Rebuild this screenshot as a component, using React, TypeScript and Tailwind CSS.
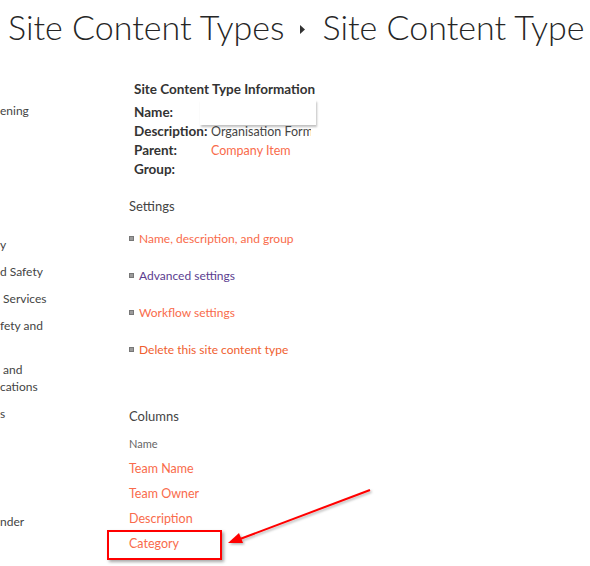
import React from "react"

const navItems = [
  { text: "ening", mt: "mt-[52px]" },
  { text: "y", mt: "mt-[117px]" },
  { text: "d Safety", mt: "mt-[10px]" },
  { text: " Services", mt: "mt-[10px]" },
  { text: "fety and", mt: "mt-[10px]" },
  { text: " and", mt: "mt-[27px]" },
  { text: "cations", mt: "mt-0" },
  { text: "s", mt: "mt-[10px]" },
  { text: "nder", mt: "mt-[91px]" },
]

const settings = [
  { label: "Name, description, and group", color: "text-[#f96b4b]" },
  { label: "Advanced settings", color: "text-[#5b3d8f]" },
  { label: "Workflow settings", color: "text-[#f96b4b]" },
  { label: "Delete this site content type", color: "text-[#f0602f]" },
]

const columns = ["Team Name", "Team Owner", "Description", "Category"]

function Info() {
  return (
    <div className="pl-[5px]">
      <div className="font-bold text-[13.5px] text-[#333] leading-[19px]">Site Content Type Information</div>
      <div className="mt-[4px] grid grid-cols-[77px_1fr] leading-[19px] text-[12.5px]">
        <div className="font-bold text-[13.5px] text-[#333]">Name:</div>
        <div className="relative">
          <div className="absolute left-[-11px] top-[-3px] w-[116px] h-[25px] bg-white shadow-[1px_2px_2px_rgba(0,0,0,0.25)]" />
        </div>
        <div className="font-bold text-[13.5px] text-[#333]">Description:</div>
        <div className="relative w-[100px] overflow-hidden whitespace-nowrap text-[#444]">Organisation Form</div>
        <div className="font-bold text-[13.5px] text-[#333]">Parent:</div>
        <div className="text-[#f96b4b]">Company Item</div>
        <div className="font-bold text-[13.5px] text-[#333]">Group:</div>
        <div />
      </div>
    </div>
  )
}

export default function App() {
  return (
    <div className="relative h-[566px] w-[590px] overflow-hidden bg-white text-[12px] text-[#444]" style={{ fontFamily: 'Lato, "Open Sans", sans-serif' }}>
      <div className="flex items-center pl-[8px] pt-[2px] h-[50px] whitespace-nowrap text-[34px] font-light text-[#262626]">
        <span>Site Content Types</span>
        <svg width="7" height="9" viewBox="0 0 7 9" className="ml-[15px] mr-[16px] mt-[6px]">
          <path d="M1 0 L6 4.5 L1 9 Z" fill="#333" />
        </svg>
        <span>Site Content Type</span>
      </div>

      <div className="flex">
        <div className="w-[129px] flex flex-col leading-[17px] whitespace-pre">
          {navItems.map((n, i) => (
            <div key={i} className={`${n.mt} h-[17px]`}>{n.text}</div>
          ))}
        </div>

        <div className="flex flex-col pt-[30px]">
          <Info />

          <div className="mt-[19px] leading-[17px] text-[13px] text-[#444]">Settings</div>
          <div className="mt-[15px] flex flex-col gap-[20px]">
            {settings.map((s) => (
              <div key={s.label} className="flex items-center h-[17px]">
                <span className="w-[5px] h-[5px] bg-[#9b9b9b] border border-[#777] mr-[5px]" />
                <span className={s.color}>{s.label}</span>
              </div>
            ))}
          </div>

          <div className="mt-[50px] leading-[17px] text-[13px] text-[#444]">Columns</div>
          <div className="mt-[11px] text-[11px] text-[#666] leading-[15px]">Name</div>
          <div className="mt-[9px] flex flex-col gap-[8px]">
            {columns.map((c) => (
              <div key={c} className="h-[17px] text-[12.5px] text-[#f96b4b]">{c}</div>
            ))}
          </div>
        </div>
      </div>

      <div className="absolute left-[107px] top-[530px] w-[115px] h-[30px] border-2 border-[#ff0000] shadow-[2px_2px_3px_rgba(0,0,0,0.35)]" />
      <svg className="absolute left-0 top-0" width="590" height="566">
        <defs>
          <filter id="sh" x="-10%" y="-10%" width="130%" height="130%">
            <feDropShadow dx="1.5" dy="1.5" stdDeviation="1" floodColor="#000" floodOpacity="0.3" />
          </filter>
        </defs>
        <g filter="url(#sh)">
          <line x1="370" y1="490" x2="240" y2="539" stroke="#ff0000" strokeWidth="2" />
          <path d="M228 543 L239 533 L243 543 Z" fill="#ff0000" />
        </g>
      </svg>
    </div>
  )
}
